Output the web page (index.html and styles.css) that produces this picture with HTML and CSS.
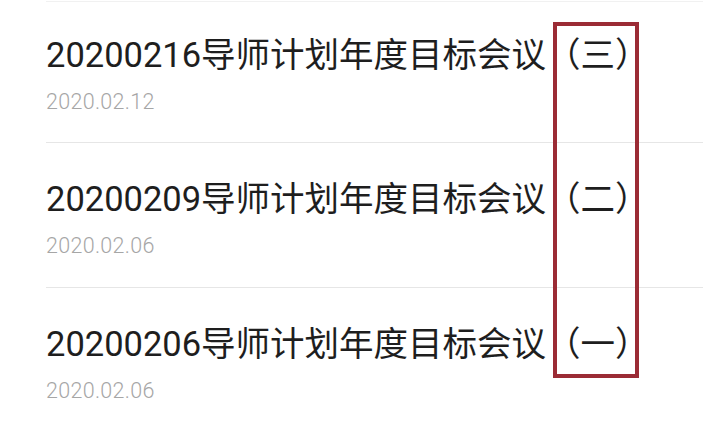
FILE: index.html
```html
<!DOCTYPE html>
<html lang="zh-CN">
<head>
<meta charset="utf-8">
<link rel="stylesheet" href="styles.css">
</head>
<body>
<div class="page">
  <ul class="list">
    <li class="item">
      <div class="title">20200216导师计划年度目标会议（三）</div>
      <div class="date">2020.02.12</div>
    </li>
    <li class="item">
      <div class="title">20200209导师计划年度目标会议（二）</div>
      <div class="date">2020.02.06</div>
    </li>
    <li class="item">
      <div class="title">20200206导师计划年度目标会议（一）</div>
      <div class="date">2020.02.06</div>
    </li>
  </ul>
  <div class="highlight"></div>
</div>
</body>
</html>
```
FILE: styles.css
```css
html, body {
  margin: 0;
  padding: 0;
  background: #ffffff;
}
.page {
  position: relative;
  width: 716px;
  height: 432px;
  overflow: hidden;
  font-family: Roboto, "Noto Sans CJK SC", sans-serif;
}
.list {
  list-style: none;
  margin: 1px 13px 0 46px;
  padding: 0;
  border-top: 1px solid #f1f1f1;
}
.item {
  height: 108px;
  padding-top: 36px;
  border-bottom: 1px solid #e6e6e6;
}
.item:first-child {
  height: 107px;
  padding-top: 33px;
}
.title {
  font-size: 34.5px;
  line-height: 40px;
  font-weight: 400;
  color: #1e1e1e;
  white-space: nowrap;
}
.date {
  margin-top: 15px;
  font-size: 21.5px;
  line-height: 24px;
  font-weight: 300;
  letter-spacing: 0.3px;
  color: #a6a6a6;
}
.highlight {
  position: absolute;
  left: 553px;
  top: 22px;
  width: 78px;
  height: 348px;
  border: 4px solid #9b2b35;
}
```
